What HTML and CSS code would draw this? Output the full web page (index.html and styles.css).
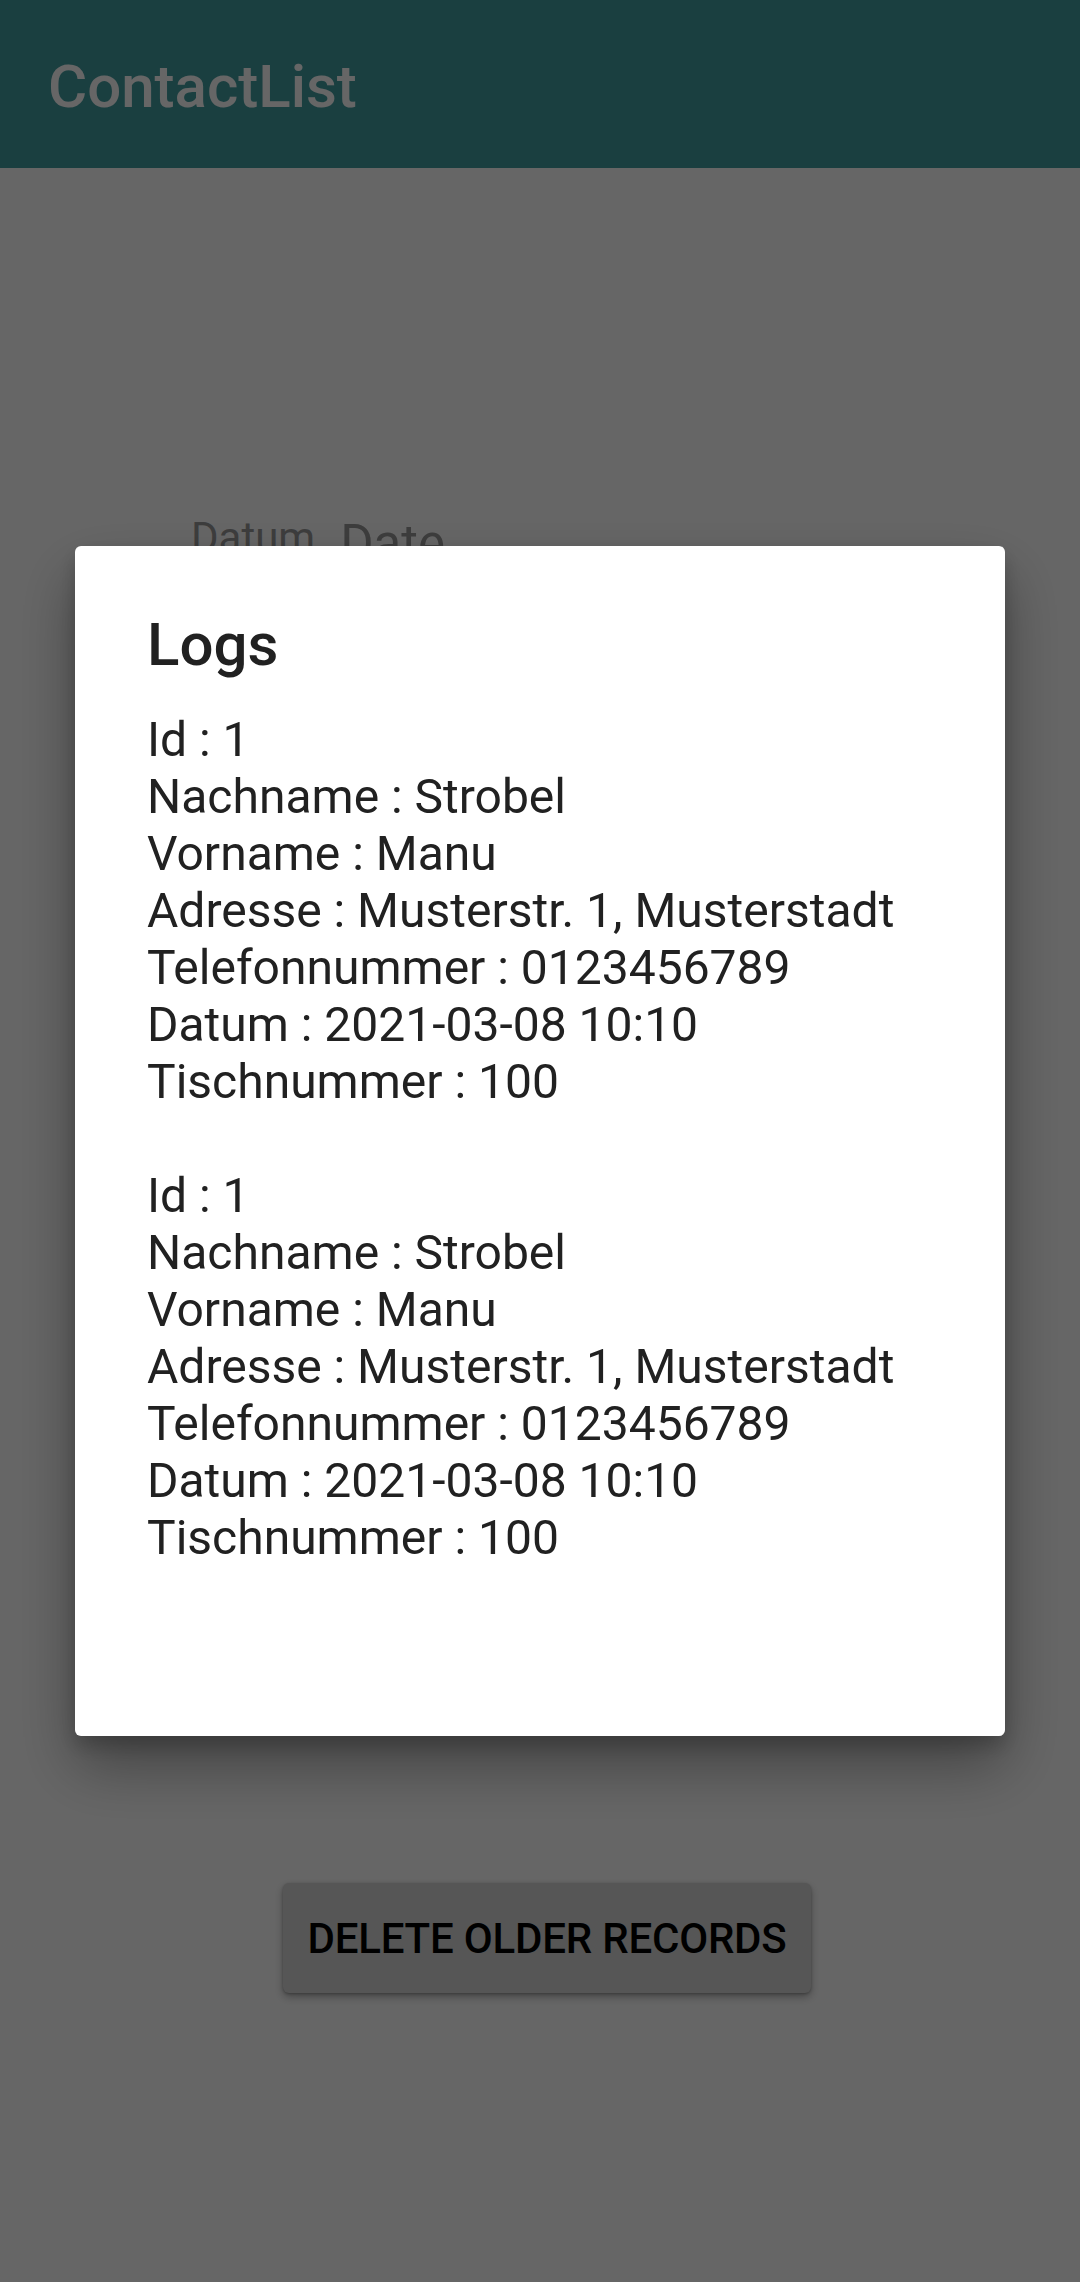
FILE: index.html
```html
<!DOCTYPE html>
<html>
<head>
<meta charset="utf-8">
<link rel="stylesheet" href="styles.css">
</head>
<body>
<header class="appbar"><span class="appbar-title">ContactList</span></header>
<main class="main">
  <div class="date-row">
    <span class="date-label">Datum</span>
    <span class="date-hint">Date</span>
  </div>
  <button class="btn">Delete older records</button>
</main>
<div class="scrim">
  <div class="dialog">
    <h1 class="dialog-title">Logs</h1>
    <div class="dialog-body">
      <div class="log">
        <div>Id : 1</div>
        <div>Nachname : Strobel</div>
        <div>Vorname : Manu</div>
        <div>Adresse : Musterstr. 1, Musterstadt</div>
        <div>Telefonnummer : 0123456789</div>
        <div>Datum : 2021-03-08 10:10</div>
        <div>Tischnummer : 100</div>
      </div>
      <div class="log">
        <div>Id : 1</div>
        <div>Nachname : Strobel</div>
        <div>Vorname : Manu</div>
        <div>Adresse : Musterstr. 1, Musterstadt</div>
        <div>Telefonnummer : 0123456789</div>
        <div>Datum : 2021-03-08 10:10</div>
        <div>Tischnummer : 100</div>
      </div>
    </div>
  </div>
</div>
</body>
</html>
```
FILE: styles.css
```css
html, body {
  margin: 0;
  padding: 0;
}
body {
  width: 1080px;
  height: 2282px;
  background: #ffffff;
  font-family: Roboto, "Noto Sans", sans-serif;
  overflow: hidden;
}
.appbar {
  box-sizing: border-box;
  height: 168px;
  background: #439ea1;
  padding: 52px 0 0 48px;
}
.appbar-title {
  display: block;
  font-size: 60px;
  line-height: 70px;
  font-weight: 500;
  color: #ffffff;
}
.main {
  display: flex;
  flex-direction: column;
}
.date-row {
  display: flex;
  align-items: flex-start;
  margin-top: 345px;
  padding-left: 191px;
  gap: 25px;
}
.date-label {
  font-size: 42px;
  line-height: 50px;
  color: #999999;
}
.date-hint {
  font-size: 51px;
  line-height: 60px;
  margin-top: 1px;
  color: #999999;
}
.btn {
  align-self: center;
  margin-top: 1309px;
  margin-left: 14px;
  height: 110px;
  padding: 0 24px;
  border: none;
  border-radius: 6px;
  background: #d6d6d6;
  color: #000000;
  font-family: Roboto, sans-serif;
  font-size: 42px;
  font-weight: 500;
  letter-spacing: -0.2px;
  text-transform: uppercase;
  box-shadow: 0 4px 8px rgba(0,0,0,0.3), 0 1px 3px rgba(0,0,0,0.25);
}
.scrim {
  position: fixed;
  inset: 0;
  background: rgba(0,0,0,0.6);
  display: flex;
  justify-content: center;
  align-items: flex-start;
  padding-top: 546px;
}
.dialog {
  box-sizing: border-box;
  width: 930px;
  height: 1190px;
  background: #ffffff;
  border-radius: 6px;
  padding: 64px 72px 0 72px;
  box-shadow: 0 30px 60px rgba(0,0,0,0.35), 0 10px 20px rgba(0,0,0,0.2);
}
.dialog-title {
  margin: 0;
  font-size: 60px;
  line-height: 70px;
  font-weight: 500;
  color: #212121;
}
.dialog-body {
  margin-top: 31px;
  display: flex;
  flex-direction: column;
  gap: 57px;
  font-size: 48px;
  line-height: 57px;
  color: #212121;
}
```
